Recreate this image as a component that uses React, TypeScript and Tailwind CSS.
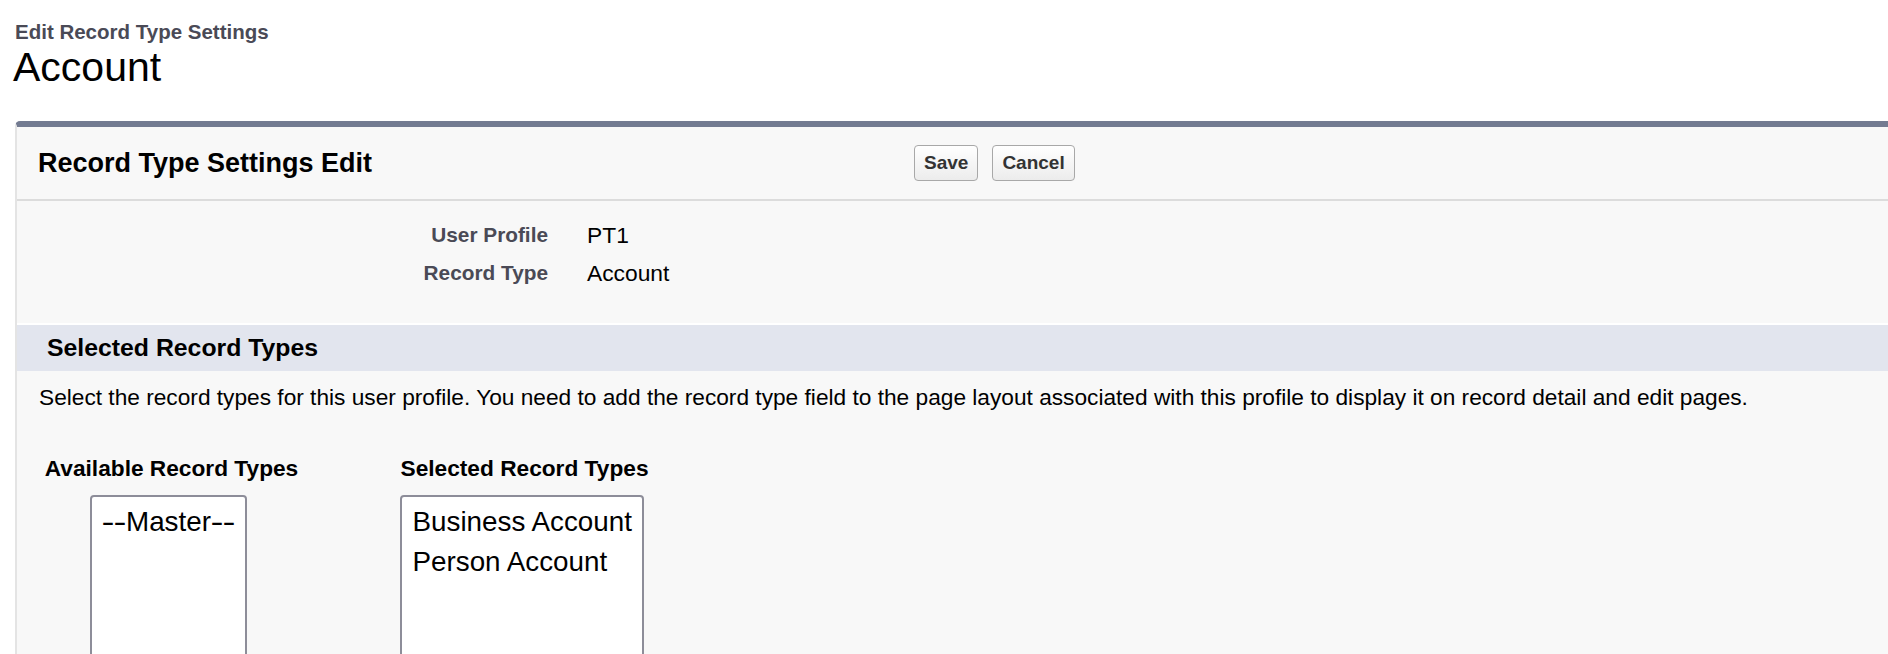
function Dash() {
  return <span className="inline-block w-[12px] scale-x-[1.4] text-center">-</span>;
}

export default function App() {
  return (
    <div className="h-[654px] w-[1888px] overflow-hidden bg-white font-['Liberation_Sans',Arial,sans-serif]">
      <div className="pl-[13px] pt-[20px]">
        <div className="ml-[2px] text-[20.5px] font-bold leading-[24px] text-[#4a4a56]">
          Edit Record Type Settings
        </div>
        <h1 className="mt-[1px] text-[41px] leading-[45px] text-black">Account</h1>
      </div>

      <div className="ml-[15px] mt-[31px] w-[1900px] rounded-tl-[5px] border-t-[6px] border-l-2 border-t-[#737b91] border-l-[#e4e4e4] bg-[#f8f8f8]">
        <div className="flex h-[74px] items-center border-b-2 border-[#dcdcdc]">
          <h2 className="w-[897px] pl-[21px] text-[27px] font-bold text-black">
            Record Type Settings Edit
          </h2>
          <div className="flex gap-[14px]">
            <button className="h-[36px] rounded-[4px] border border-[#a8a8a8] bg-gradient-to-b from-white to-[#ececec] px-[9px] text-[19px] font-bold text-[#333]">
              Save
            </button>
            <button className="h-[36px] rounded-[4px] border border-[#a8a8a8] bg-gradient-to-b from-white to-[#ececec] px-[9px] text-[19px] font-bold text-[#333]">
              Cancel
            </button>
          </div>
        </div>

        <div className="pb-[31px] pt-[15px]">
          {[
            ["User Profile", "PT1"],
            ["Record Type", "Account"],
          ].map(([label, value]) => (
            <div key={label} className="flex h-[38px] items-center gap-[39px]">
              <div className="w-[531px] text-right text-[20.8px] font-bold text-[#4a4a56]">{label}</div>
              <div className="text-[22.8px] text-black">{value}</div>
            </div>
          ))}
        </div>

        <div className="border-t-2 border-white bg-[#e2e5ee]">
          <h3 className="flex h-[46px] items-center pl-[30px] text-[24.8px] font-bold text-black">
            Selected Record Types
          </h3>
        </div>

        <p className="pl-[22px] pt-[13px] text-[22.7px] leading-[26px] text-black">
          Select the record types for this user profile. You need to add the record type field to the page layout associated with this profile to display it on record detail and edit pages.
        </p>

        <div className="mt-[45px] flex gap-[103px] pl-[28px]">
          <div className="flex w-[253px] flex-col items-center">
            <div className="whitespace-nowrap text-[22.7px] font-bold leading-[26px] text-black">
              Available Record Types
            </div>
            <div className="ml-[-6px] mt-[14px] h-[220px] w-[157px] overflow-hidden whitespace-nowrap rounded-[4px] border-2 border-[#8d8d99] bg-white pl-[10px] pt-[5px] text-[27.8px] leading-[40px] text-black">
              <div>
                <Dash />
                <Dash />
                Master
                <Dash />
                <Dash />
              </div>
            </div>
          </div>
          <div className="flex w-[247px] flex-col items-center">
            <div className="whitespace-nowrap text-[22.7px] font-bold leading-[26px] text-black">
              Selected Record Types
            </div>
            <div className="ml-[-6px] mt-[14px] h-[220px] w-[244px] overflow-hidden whitespace-nowrap rounded-[4px] border-2 border-[#8d8d99] bg-white pl-[11px] pt-[5px] text-[27.8px] leading-[40px] text-black">
              <div>Business Account</div>
              <div>Person Account</div>
            </div>
          </div>
        </div>
      </div>
    </div>
  );
}
